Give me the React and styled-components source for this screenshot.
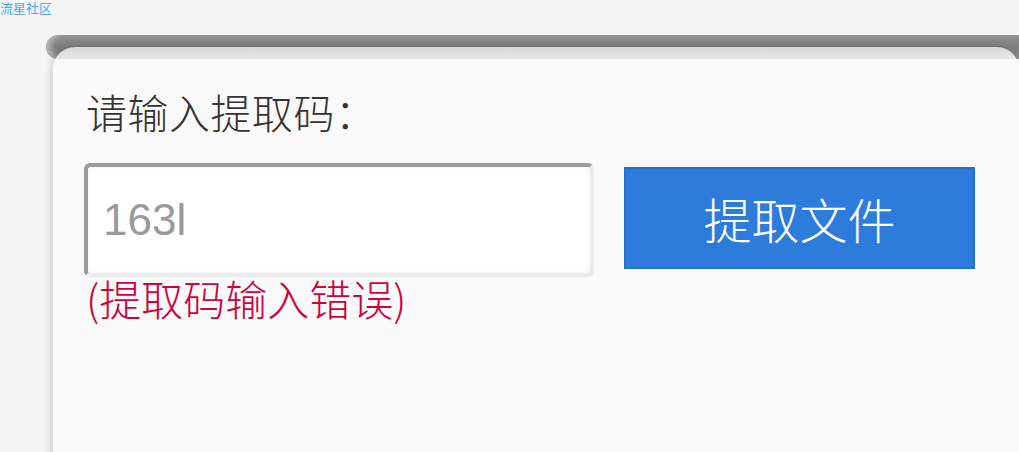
import styled, {createGlobalStyle} from 'styled-components';
import {useState} from 'react';

const GlobalStyle = createGlobalStyle`
  html, body {
    margin: 0;
    padding: 0;
    background: #f5f5f5;
    overflow: hidden;
  }
  body {
    font-family: "Noto Sans CJK SC", "Noto Sans", sans-serif;
  }
`;

const Page = styled.div`
  width: 1019px;
  height: 452px;
  overflow: hidden;
`;

const HomeLink = styled.a`
  display: block;
  font-size: 13px;
  line-height: 15px;
  color: #4ea5f4;
  text-decoration: none;
`;

const Roll = styled.div`
  height: 24px;
  margin: 20px 0 0 46px;
  border-radius: 12px 0 0 12px;
  background: linear-gradient(to bottom, #8e9194 0%, #7b7e81 50%, #85888b 100%);
  box-shadow: inset 7px 0 6px -2px rgba(255, 255, 255, 0.4);
`;

const Card = styled.div`
  margin: -12px 0 0 53px;
  height: 420px;
  box-sizing: border-box;
  padding: 40px 0 0 33px;
  border-radius: 22px 22px 0 0;
  background: linear-gradient(to bottom, #d8d8d8 0, #e7e7e7 12px, #fafafa 12px);
  box-shadow: -3px 0 7px rgba(0, 0, 0, 0.13);
`;

const Label = styled.div`
  font-size: 41px;
  font-weight: 300;
  line-height: 48px;
  color: #333333;
  letter-spacing: 0.5px;
`;

const Row = styled.div`
  display: flex;
  align-items: flex-start;
  gap: 30px;
  margin-top: 28px;
  margin-left: -2px;
`;

const CodeInput = styled.input`
  width: 510px;
  height: 114px;
  box-sizing: border-box;
  padding: 0 0 0 15px;
  border: 4px solid;
  border-color: #9b9b9b #ececec #ececec #9b9b9b;
  border-radius: 6px;
  background: #ffffff;
  box-shadow: inset 0 0 4px rgba(0, 0, 0, 0.06);
  font-family: "Liberation Sans", Arial, sans-serif;
  font-size: 44px;
  color: #9a9a9a;
  outline: none;
`;

const SubmitButton = styled.button`
  width: 351px;
  height: 102px;
  margin-top: 4px;
  box-sizing: border-box;
  border: 2px solid #2570d5;
  border-radius: 0;
  background: #2d7cdc;
  color: #ffffff;
  font-family: "Noto Sans CJK SC", sans-serif;
  font-size: 48px;
  font-weight: 300;
  line-height: 1;
  cursor: pointer;
`;

const ErrorText = styled.div`
  font-size: 42px;
  font-weight: 300;
  line-height: 41px;
  color: #d1003b;
`;

export default function App() {
    const [code, setCode] = useState('163l');

    return (
        <Page>
            <GlobalStyle/>
            <HomeLink href="#">流星社区</HomeLink>
            <Roll/>
            <Card>
                <Label>请输入提取码：</Label>
                <Row>
                    <CodeInput value={code} onChange={e => setCode(e.target.value)}/>
                    <SubmitButton>提取文件</SubmitButton>
                </Row>
                <ErrorText>(提取码输入错误)</ErrorText>
            </Card>
        </Page>
    );
}
